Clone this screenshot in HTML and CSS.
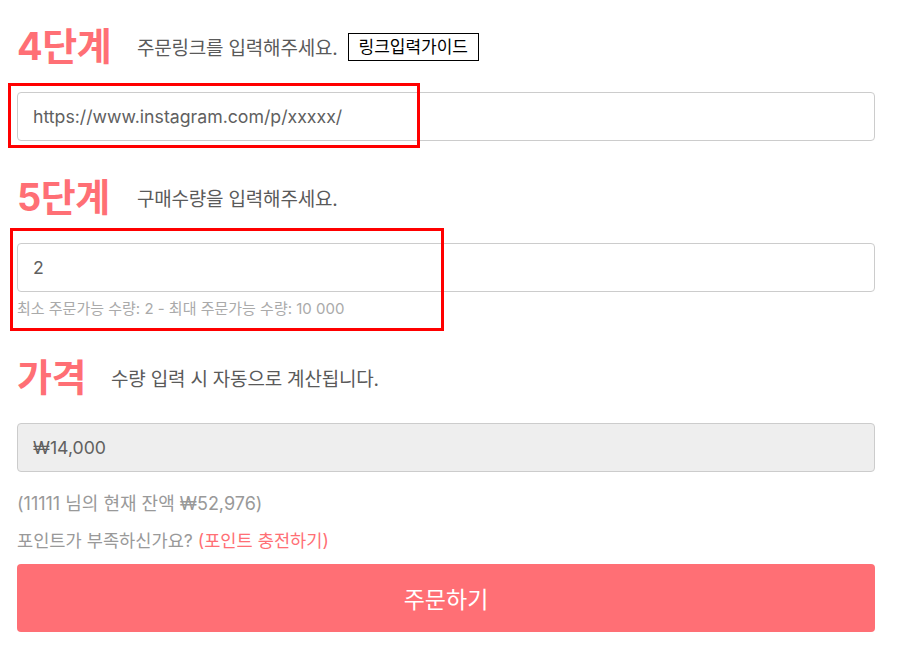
FILE: index.html
```html
<!DOCTYPE html>
<html lang="ko">
<head>
<meta charset="utf-8">
<link rel="stylesheet" href="styles.css">
</head>
<body>
<div class="page">
  <div class="step step-link">
    <div class="head">
      <h2 class="title">4단계</h2>
      <span class="desc">주문링크를 입력해주세요.</span>
      <span class="guide">링크입력가이드</span>
    </div>
    <div class="field">https://www.instagram.com/p/xxxxx/</div>
    <div class="mark mark-link"></div>
  </div>

  <div class="step step-qty">
    <div class="head">
      <h2 class="title">5단계</h2>
      <span class="desc">구매수량을 입력해주세요.</span>
    </div>
    <div class="field">2</div>
    <p class="hint">최소 주문가능 수량: 2 - 최대 주문가능 수량: 10 000</p>
    <div class="mark mark-qty"></div>
  </div>

  <div class="step step-price">
    <div class="head">
      <h2 class="title">가격</h2>
      <span class="desc desc-price">수량 입력 시 자동으로 계산됩니다.</span>
    </div>
    <div class="field field-readonly">₩14,000</div>
    <p class="balance">(11111 님의 현재 잔액 ₩52,976)</p>
    <p class="points">포인트가 부족하신가요? <span class="charge">(포인트 충전하기)</span></p>
  </div>

  <button class="order">주문하기</button>
</div>
</body>
</html>
```

FILE: styles.css
```css
* { box-sizing: border-box; }
html, body { margin: 0; padding: 0; background: #fff; }
body {
  font-family: Inter, "Noto Sans CJK KR", sans-serif;
  color: #555;
}
.page {
  width: 858px;
  margin-left: 17px;
  padding-top: 25px;
  display: flex;
  flex-direction: column;
}
.step { position: relative; display: flex; flex-direction: column; }
.head {
  display: flex;
  align-items: center;
  height: 43px;
}
.title {
  margin: 0;
  font-size: 38px;
  line-height: 43px;
  font-weight: 700;
  color: #ff6f75;
  letter-spacing: -0.5px;
  width: 120px;
}
.step-price .title { width: 94px; }
.desc {
  font-size: 19px;
  color: #5a5a5a;
  letter-spacing: -0.2px;
}
.guide {
  margin-left: 10px;
  border: 1px solid #000;
  color: #000;
  font-size: 17px;
  line-height: 26px;
  padding: 0 10px;
  height: 28px;
}
.field {
  margin-top: 24px;
  height: 49px;
  border: 1px solid #ccc;
  border-radius: 4px;
  padding: 0 15px;
  display: flex;
  align-items: center;
  font-size: 17.7px;
  color: #606060;
}
.field-readonly { background: #eee; }
.step-qty { margin-top: 35px; }
.step-price { margin-top: 37px; }
.hint {
  margin: 7px 0 0;
  font-size: 15px;
  line-height: 20px;
  color: #aaa;
}
.balance {
  margin: 20px 0 0;
  font-size: 18px;
  line-height: 24px;
  color: #999;
}
.points {
  margin: 13px 0 0;
  font-size: 17.6px;
  line-height: 24px;
  color: #999;
}
.charge { color: #ff6f75; }
.order {
  margin-top: 11px;
  height: 68px;
  border: 0;
  border-radius: 4px;
  background: #ff6f75;
  color: #fff;
  font-family: inherit;
  font-size: 23px;
  width: 100%;
}
.mark {
  position: absolute;
  border: 3px solid #f00;
  pointer-events: none;
}
.mark-link { left: -9px; top: 58px; width: 412px; height: 65px; }
.mark-qty { left: -7px; top: 52px; width: 434px; height: 103px; }
```
